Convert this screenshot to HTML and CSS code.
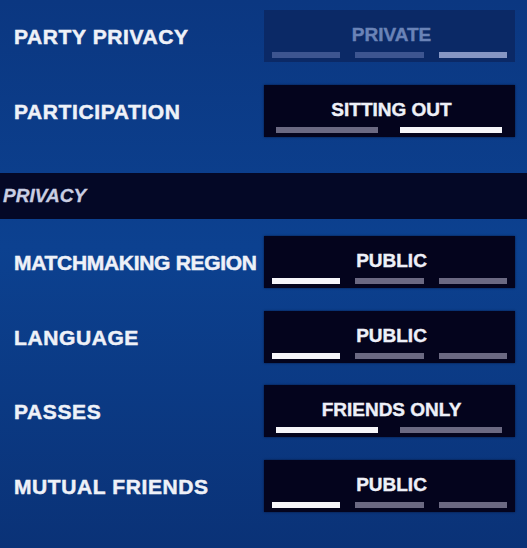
FILE: index.html
```html
<!DOCTYPE html>
<html lang="en">

<head>
  <meta charset="UTF-8">
  <meta name="viewport" content="width=device-width, initial-scale=1.0">
  <title>Party settings</title>
  <link rel="stylesheet" href="styles.css">
</head>

<body>
  <div class="settings">
    <div class="settings-section top">
      <div class="row">
        <span class="label">PARTY PRIVACY</span>
        <div class="picker disabled">
          <span class="value">PRIVATE</span>
          <div class="steps three">
            <i></i><i></i><i class="on"></i>
          </div>
        </div>
      </div>
      <div class="row">
        <span class="label">PARTICIPATION</span>
        <div class="picker">
          <span class="value">SITTING OUT</span>
          <div class="steps two">
            <i></i><i class="on"></i>
          </div>
        </div>
      </div>
    </div>

    <div class="section-header">PRIVACY</div>

    <div class="settings-section">
      <div class="row">
        <span class="label long">MATCHMAKING REGION</span>
        <div class="picker">
          <span class="value">PUBLIC</span>
          <div class="steps three">
            <i class="on"></i><i></i><i></i>
          </div>
        </div>
      </div>
      <div class="row">
        <span class="label">LANGUAGE</span>
        <div class="picker">
          <span class="value">PUBLIC</span>
          <div class="steps three">
            <i class="on"></i><i></i><i></i>
          </div>
        </div>
      </div>
      <div class="row">
        <span class="label">PASSES</span>
        <div class="picker">
          <span class="value">FRIENDS ONLY</span>
          <div class="steps two">
            <i class="on"></i><i></i>
          </div>
        </div>
      </div>
      <div class="row">
        <span class="label">MUTUAL FRIENDS</span>
        <div class="picker">
          <span class="value">PUBLIC</span>
          <div class="steps three">
            <i class="on"></i><i></i><i></i>
          </div>
        </div>
      </div>
    </div>
  </div>
</body>

</html>
```

FILE: styles.css
```css
body {
  margin: 0;
  padding: 0;
  width: 527px;
  height: 548px;
  overflow: hidden;
  background: linear-gradient(180deg, #0b3781 0%, #0c4190 45%, #0a3277 100%);
  font-family: "Liberation Sans", Arial, sans-serif;
  font-weight: bold;
}

.settings {
  display: flex;
  flex-direction: column;
}

.settings-section {
  display: flex;
  flex-direction: column;
  gap: 22.5px;
  padding-top: 17px;
}

.settings-section.top {
  gap: 23px;
  padding-top: 10px;
}

.row {
  display: flex;
  justify-content: space-between;
  align-items: center;
  height: 52px;
  padding: 0 12px 0 14px;
}

.label {
  color: #eef1f8;
  font-size: 21px;
  letter-spacing: 0.6px;
  white-space: nowrap;
  padding-top: 2px;
  -webkit-text-stroke: 0.5px #eef1f8;
}

/* the long one would run into the picker */
.label.long {
  letter-spacing: -0.3px;
}

.picker {
  flex-shrink: 0;
  width: 251px;
  height: 52px;
  box-sizing: border-box;
  padding-top: 15px;
  display: flex;
  flex-direction: column;
  align-items: center;
  background-color: #04041d;
  box-shadow: 0 0 2px rgba(0, 0, 20, 0.6);
}

.value {
  color: #eef0f8;
  font-size: 19px;
  line-height: 19px;
  padding-left: 4px;
  white-space: nowrap;
  -webkit-text-stroke: 0.4px #eef0f8;
}

.steps {
  display: flex;
  width: 100%;
  box-sizing: border-box;
  margin-top: 8px;
}

.steps i {
  flex: 1;
  height: 6px;
  background-color: #6b6982;
}

.steps i.on {
  background-color: #f6f6fa;
}

.steps.three {
  gap: 15px;
  padding: 0 8px;
}

.steps.two {
  gap: 22px;
  padding: 0 13px 0 12px;
}

/* greyed out picker, party privacy can't be changed */
.picker.disabled {
  background-color: #0b2966;
  box-shadow: none;
}

.picker.disabled .value {
  color: #6a83b7;
  -webkit-text-stroke: 0.4px #6a83b7;
}

.picker.disabled .steps i {
  background-color: #3d5590;
}

.picker.disabled .steps i.on {
  background-color: #8596c4;
}

.section-header {
  margin-top: 36px;
  height: 46px;
  display: flex;
  align-items: center;
  padding-left: 3px;
  background-color: #040826;
  color: #c9cee2;
  font-size: 19px;
  font-style: italic;
  -webkit-text-stroke: 0.3px #c9cee2;
}
```
